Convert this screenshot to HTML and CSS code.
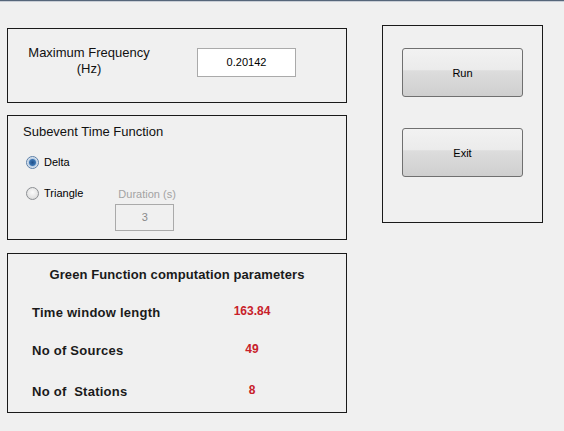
FILE: index.html
```html
<!DOCTYPE html>
<html lang="en">
<head>
    <meta charset="UTF-8">
    <title>Green Function</title>
    <link rel="stylesheet" href="styles.css">
</head>
<body>
    <div class="window">
        <!-- левая колонка -->
        <div class="left-col">
            <div class="panel freq-panel">
                <div class="freq-label">Maximum Frequency<br>(Hz)</div>
                <div class="edit freq-edit">0.20142</div>
            </div>

            <div class="panel stf-panel">
                <div class="panel-title">Subevent Time Function</div>
                <div class="radio-row">
                    <span class="radio checked"></span>
                    <span class="radio-label">Delta</span>
                </div>
                <div class="triangle-row">
                    <div class="radio-row">
                        <span class="radio"></span>
                        <span class="radio-label">Triangle</span>
                    </div>
                    <div class="duration">
                        <div class="duration-label">Duration (s)</div>
                        <div class="edit duration-edit">3</div>
                    </div>
                </div>
            </div>

            <div class="panel green-panel">
                <div class="green-title">Green Function computation parameters</div>
                <div class="param-row row-1">
                    <span class="param-label">Time window length</span>
                    <span class="param-value">163.84</span>
                </div>
                <div class="param-row row-2">
                    <span class="param-label">No of Sources</span>
                    <span class="param-value">49</span>
                </div>
                <div class="param-row row-3">
                    <span class="param-label">No of&nbsp; Stations</span>
                    <span class="param-value">8</span>
                </div>
            </div>
        </div>

        <!-- кнопки справа -->
        <div class="panel buttons-panel">
            <button class="btn">Run</button>
            <button class="btn">Exit</button>
        </div>
    </div>
</body>
</html>
```

FILE: styles.css
```css
/* Основные стили */
body {
    margin: 0;
    background-color: #f0f0f0;
    font-family: "Liberation Sans", Arial, sans-serif;
    color: #000;
}
.window {
    display: flex;
    align-items: flex-start;
    height: 431px;
    box-sizing: border-box;
    border-top: 1px solid #56667a;
    box-shadow: inset 0 1px 0 #c9ced6;
    padding-left: 7px;
}
.left-col {
    display: flex;
    flex-direction: column;
    width: 340px;
    margin-top: 27px;
}
.panel {
    border: 1px solid #1a1a1a;
    box-sizing: border-box;
}

/* Частота */
.freq-panel {
    display: flex;
    align-items: flex-start;
    height: 75px;
}
.freq-label {
    width: 162px;
    margin-top: 16px;
    font-size: 13px;
    line-height: 16px;
    text-align: center;
    color: #111;
}
.edit {
    background: #fff;
    border: 1px solid #aaaaaa;
    box-sizing: border-box;
    text-align: center;
}
.freq-edit {
    margin-top: 19px;
    margin-left: 27px;
    width: 99px;
    height: 29px;
    line-height: 27px;
    font-size: 11px;
}

/* Функция времени */
.stf-panel {
    height: 125px;
    margin-top: 12px;
    padding: 8px 0 0 15px;
}
.panel-title {
    font-size: 13px;
    line-height: 16px;
    color: #111;
}
.radio-row {
    display: flex;
    align-items: center;
    margin-left: 3px;
}
.stf-panel > .radio-row {
    margin-top: 15px;
}
.radio {
    width: 11px;
    height: 11px;
    border-radius: 50%;
    border: 1px solid #8c8f93;
    background: radial-gradient(circle at 50% 40%, #fbfbfb 0%, #e4e4e4 60%, #cfcfcf 100%);
}
.radio.checked {
    border-color: #5b7fa8;
    background: radial-gradient(circle, #1f4f8a 0, #3a74b2 3px, #b9cde3 4px, #eef2f6 6px);
}
.radio-label {
    margin-left: 5px;
    font-size: 11px;
    line-height: 14px;
}
.triangle-row {
    display: flex;
    align-items: flex-start;
    margin-top: 17px;
}
.duration {
    margin-left: 32px;
    margin-top: 2px;
}
.duration-label {
    font-size: 11px;
    line-height: 12px;
    color: #a3a3a3;
    padding-left: 3px;
}
.duration-edit {
    margin-top: 4px;
    width: 59px;
    height: 27px;
    line-height: 25px;
    font-size: 11px;
    color: #8a8a8a;
    background: #f0f0f0;
}

/* Параметры функции Грина */
.green-panel {
    height: 160px;
    margin-top: 13px;
    padding-top: 13px;
}
.green-title {
    font-size: 13px;
    font-weight: bold;
    line-height: 16px;
    letter-spacing: 0.1px;
    text-align: center;
    color: #1a1a1a;
}
.param-row {
    display: flex;
    align-items: center;
    padding-left: 24px;
    font-weight: bold;
    font-size: 13px;
    line-height: 16px;
}
.row-1 { margin-top: 22px; }
.row-2 { margin-top: 22px; }
.row-3 { margin-top: 25px; }
.param-label {
    width: 170px;
    color: #1a1a1a;
    letter-spacing: 0.25px;
}
.param-value {
    width: 100px;
    text-align: center;
    color: #c8202a;
    font-size: 12px;
    position: relative;
    top: -2px;
}

/* Кнопки */
.buttons-panel {
    display: flex;
    flex-direction: column;
    width: 161px;
    height: 198px;
    margin-top: 24px;
    margin-left: 35px;
    padding: 22px 0 0 19px;
}
.btn {
    width: 121px;
    height: 49px;
    border: 1px solid #707070;
    border-radius: 3px;
    background: linear-gradient(#f2f2f2 0%, #ebebeb 45%, #dddddd 46%, #cfcfcf 100%);
    font-family: "Liberation Sans", Arial, sans-serif;
    font-size: 11px;
    color: #000;
    padding: 0;
}
.btn + .btn {
    margin-top: 31px;
}
```
